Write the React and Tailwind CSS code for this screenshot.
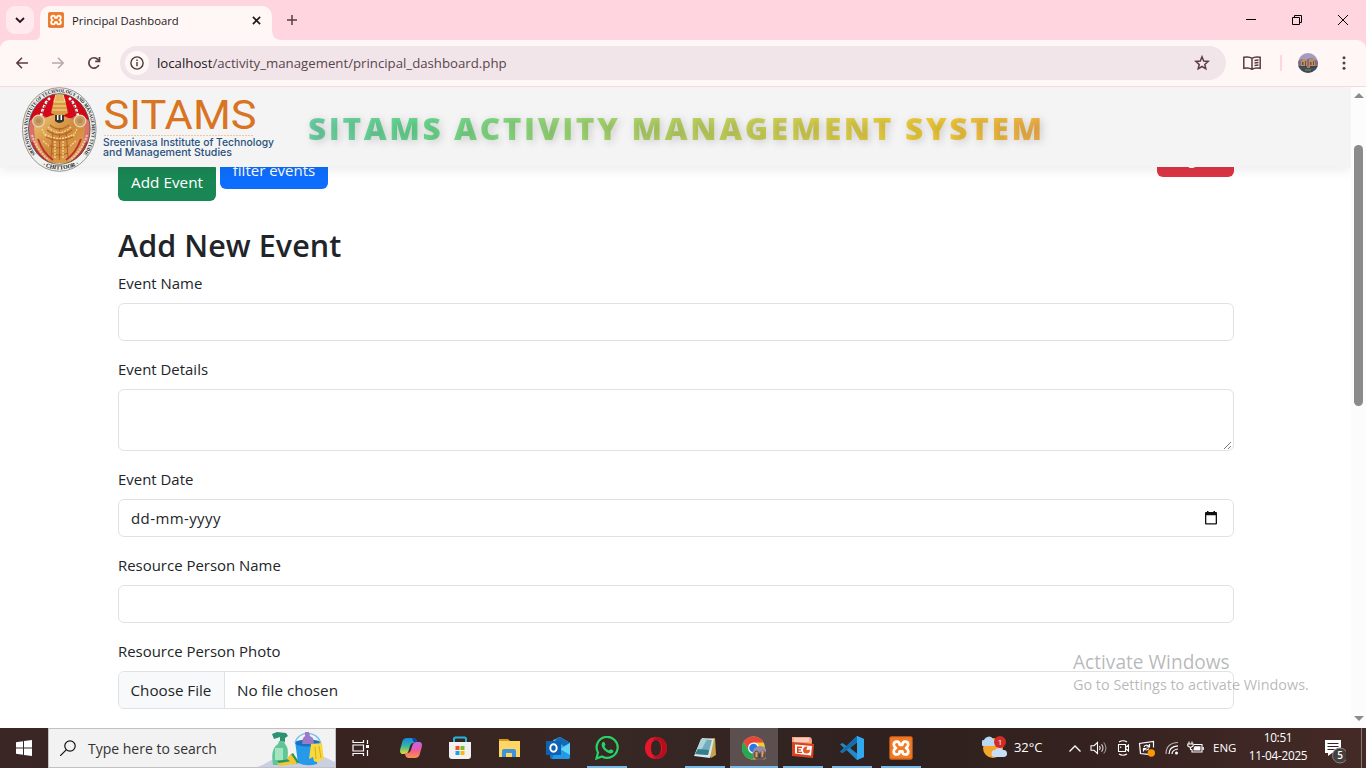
import React from "react";

const XamppMark = ({ className }) => (
  <svg viewBox="0 0 24 24" className={className}>
    <rect x=".3" y=".3" width="23.4" height="23.4" rx="2.2" fill="#d8651c" />
    <rect x="1.3" y="1.2" width="21.4" height="21" rx="1.6" fill="#f37a25" />
    <path
      d="M8 5.6c-2 0-3.2 1.2-3.2 3 0 1.500.9 2.500 2.200 3.400-1.400.8-2.300 1.900-2.300 3.400 0 1.900 1.300 3.100 3.200 3.100 2.300 0 2.700-1.500 2.700-3.200h2.800c0 1.700.5 3.200 2.700 3.200 1.900 0 3.200-1.200 3.200-3.100 0-1.500-.9-2.600-2.300-3.400 1.300-.9 2.200-1.900 2.200-3.400 0-1.800-1.200-3-3.100-3-2.200 0-2.700 1.400-2.700 3.200h-2.800C10.600 7 10.100 5.600 8 5.600Z"
      fill="none"
      stroke="#fff"
      strokeWidth="2.700"
      strokeLinejoin="round"
    />
  </svg>
);

const Avatar = ({ className }) => (
  <svg viewBox="0 0 20 20" className={className}>
    <clipPath id="avatarClip"><circle cx="10" cy="10" r="10" /></clipPath>
    <g clipPath="url(#avatarClip)">
      <path fill="#a49bbd" d="M0 0h20v20H0z" />
      <path fill="#7a6f86" d="M0 8l4-2 3 2 3-2 4-1 6 3v8H0z" />
      <path fill="#45454e" d="M0 13h20v7H0z" />
      <path fill="#c48d5c" d="M3 8c2-3 5-2 6 0v5H3zM11 7c2-2 5-2 6 1v5h-6z" />
      <path fill="#6d5148" d="M4 9h1.500v3H4zM7 8h1v5H7zM12 9h1.500v3H12zM15 8h1v4h-1z" />
      <path fill="#31566c" d="M2 14h7v2H2zM12 15h7v2h-7z" />
      <path fill="#56763f" d="M7 16h6v2H7z" />
      <path fill="#cf6d64" d="M9 13h3v2H9z" />
    </g>
  </svg>
);

const TabStrip = () => (
  <div className="flex h-10 items-end bg-[#ffd6df]">
    <div className="mb-1.5 ml-1.5 flex h-7 w-7 items-center justify-center rounded-[9px] bg-[#ffeaee]">
      <svg viewBox="0 0 10 10" className="h-2.5 w-2.5" fill="none" stroke="#23191c" strokeWidth="1.800">
        <path d="M1 3l4 4 4-4" />
      </svg>
    </div>
    <svg viewBox="0 0 6 6" className="h-1.5 w-1.5 self-end"><path d="M6 0v6H0q6 0 6-6" fill="#fff7f6" /></svg>
    <div className="flex h-[34px] w-[232px] items-center rounded-t-[10px] bg-[#fff7f6] pr-[11px] pl-2 pb-1.5">
      <XamppMark className="h-4 w-4" />
      <span className="mt-0.5 ml-2 flex-1 text-[11.3px] whitespace-nowrap text-[#23191c]">Principal Dashboard</span>
      <svg viewBox="0 0 10 10" className="h-[9px] w-[9px]" fill="none" stroke="#23191c" strokeWidth="1.800">
        <path d="M1 1l8 8M9 1L1 9" />
      </svg>
    </div>
    <svg viewBox="0 0 10 10" className="h-2.5 w-2.5 self-end"><path d="M0 0v10h10Q0 10 0 0" fill="#fff7f6" /></svg>
    <svg viewBox="0 0 10 10" className="mb-[15px] ml-[5px] h-2.5 w-2.5" stroke="#5a3c43" strokeWidth="1.500">
      <path d="M5 0v10M0 5h10" />
    </svg>
    <div className="ml-auto flex h-full items-center gap-9 pr-[18px]">
      <svg viewBox="0 0 10 10" className="h-2.5 w-2.5" shapeRendering="crispEdges"><path d="M0 4h10v1H0z" /></svg>
      <svg viewBox="0 0 10 10" className="h-2.5 w-2.5" fill="none" stroke="#000">
        <path d="M.5 2.500h7v7h-7zM2.500 2.500v-2h7v7h-2" />
      </svg>
      <svg viewBox="0 0 10 10" className="h-2.5 w-2.5" stroke="#000"><path d="M0 0l10 10M10 0L0 10" /></svg>
    </div>
  </div>
);

const Toolbar = () => (
  <div className="bg-[#ffd6df]">
    <div className="flex h-[47px] items-center rounded-t-[9px] border-b border-[#f8dadc] bg-[#fff7f6] pl-4">
      <svg viewBox="0 0 12 12" className="h-3 w-3" fill="none" stroke="#5a3c43" strokeWidth="1.500"><path d="M12 6H1M6 .7L.9 6 6 11.300" /></svg>
      <svg viewBox="0 0 12 12" className="ml-6 h-3 w-3" fill="none" stroke="#b9a8aa" strokeWidth="1.500"><path d="M0 6h11M6 .7L11.100 6 6 11.300" /></svg>
      <svg viewBox="0 0 14 14" className="ml-[23px] h-3.5 w-3.5" fill="none" stroke="#5a3c43" strokeWidth="1.700">
        <path d="M11.800 9A5.200 5.200 0 1 1 11 3.600l1.400 1.500" /><path d="M12.500 1v4.300H8.200" />
      </svg>
      <div className="ml-[19px] flex h-[34px] w-[1106px] items-center rounded-full bg-[#f1e5ea] pr-4 pl-[5px]">
        <span className="flex h-6 w-6 items-center justify-center rounded-full bg-[#fff7f6]">
          <svg viewBox="0 0 14 14" className="h-3.5 w-3.5" fill="none" stroke="#4a373c" strokeWidth="1.400">
            <circle cx="7" cy="7" r="6.100" /><path d="M7 6v4.300M7 3.500V5" />
          </svg>
        </span>
        <span className="mt-0.5 ml-2 text-[13.230px] text-[#5a454b]">
          <span className="text-[#21171a]">localhost</span>/activity_management/principal_dashboard.php
        </span>
        <svg viewBox="0 0 16 16" className="ml-auto h-4 w-4" fill="none" stroke="#5a3c43" strokeWidth="1.500">
          <path d="M8 1.800l1.700 4.200 4.500.4-3.400 3 1 4.400L8 11.500l-3.800 2.300 1-4.400-3.400-3 4.500-.4z" />
        </svg>
      </div>
      <svg viewBox="0 0 18 14" className="ml-[17px] h-3.5 w-[18px]" fill="none" stroke="#5a3c43" strokeWidth="1.500">
        <path d="M9 2.300C7.200.9 4 .7.800 1.300v11c3-.6 6.400-.3 8.200 1 1.800-1.300 5.200-1.600 8.200-1v-11C14 .7 10.800.9 9 2.300v11M11.500 4.500l4-.4M11.500 7l4-.4M11.500 9.500l4-.4" />
      </svg>
      <div className="ml-[19px] h-4 w-0.5 bg-[#ffd6df]" />
      <Avatar className="ml-4 h-5 w-5" />
      <svg viewBox="0 0 4 14" className="ml-6 h-3.5 w-1" fill="#5a3c43">
        <circle cx="2" cy="1.800" r="1.500" /><circle cx="2" cy="7" r="1.500" /><circle cx="2" cy="12.200" r="1.500" />
      </svg>
    </div>
  </div>
);

const CollegeLogo = () => (
  <svg viewBox="0 0 260 86" className="h-[86px] w-[260px] shrink-0">
    <defs>
      <path id="ring" d="M13.500 67A32.200 37 0 1 1 61.500 67" />
      <path id="ringLow" d="M15 76Q37.500 89 60 76" />
      <clipPath id="inner"><ellipse cx="37.300" cy="42" rx="30.800" ry="35.300" /></clipPath>
      <linearGradient id="gold" x1="0" y1="0" x2="1" y2="1">
        <stop offset="0" stopColor="#efc676" /><stop offset=".5" stopColor="#d08a3c" /><stop offset="1" stopColor="#e2a552" />
      </linearGradient>
    </defs>
    <ellipse cx="37.300" cy="42.500" rx="36.800" ry="41.800" fill="#f1f1ee" stroke="#8b8b8b" strokeWidth=".9" />
    <g clipPath="url(#inner)">
      <path d="M0 0h76v86H0z" fill="#f3ead2" />
      <path d="M0 5h76v27L52 36H22L4 34z" fill="#d3081b" />
      <path d="M4 36l15-9 6 4 25 0 6-4 15 9v22L56 76H18L6 58z" fill="#d7736a" />
      <path d="M12 40q14-14 25-12t26 12l-2 22-12 14H26L14 62z" fill="url(#gold)" />
      <path d="M10 55q6 14 16 20M65 55q-6 14-16 20M16 52q5 14 15 21M59 52q-5 14-15 21" fill="none" stroke="#bd2f35" strokeWidth="2" />
      <path d="M10 48q5 16 17 25M65 48q-5 16-17 25" fill="none" stroke="#f0c6bb" strokeWidth="2" strokeDasharray="2 1" />
      <path d="M32 12h11l3 14q-8 6-17 0z" fill="#d99a41" />
      <path d="M34 7h7l2 8H32zM31 19h13M30 23h15" fill="#e4b35b" stroke="#f7dd94" strokeWidth="1" />
      <path d="M28 11q-6 5-9 18M47 11q6 5 9 18" fill="none" stroke="#fff" strokeWidth="2.600" strokeDasharray="3 1.500" />
      <path d="M26 15q-5 5-6 15M49 15q5 5 6 15" fill="none" stroke="#4c7440" strokeWidth="1.200" strokeDasharray="2 3" />
      <circle cx="16.500" cy="34" r="5.800" fill="#c99f68" stroke="#eed9ad" strokeWidth="1.200" />
      <circle cx="58" cy="34" r="5.800" fill="#c99f68" stroke="#eed9ad" strokeWidth="1.200" />
      <circle cx="16.500" cy="34" r="2.500" fill="#b98a52" /><circle cx="58" cy="34" r="2.500" fill="#b98a52" />
      <path d="M28 38q9 8 19 0M25 43q12 10 25 0M24 50q13 7 27 0M26 58q11 6 23 0M29 66q8 4 17 0M31 44l-2 26M44 44l2 26M37.500 41v32" fill="none" stroke="#b26426" strokeWidth="1.100" />
      <path d="M26 40q11 11 23 0M23 47q14 9 29 0M33 54v18M41 54v18M21 54l6 5M54 54l-6 5M20 42l4 8M55 42l-4 8" fill="none" stroke="#f7d993" strokeWidth="1.300" strokeDasharray="2 1" />
      <path d="M33 28h9v6q-4.500 4-9 0z" fill="#3b332e" /><path d="M35 28h1.500v5H35zM38.500 28H40v5h-1.500z" fill="#fff" />
    </g>
    <ellipse cx="37.300" cy="42" rx="30.800" ry="35.300" fill="none" stroke="#4b4b4b" strokeWidth=".8" />
    <text fontFamily="Liberation Serif" fontWeight="700" fontSize="5" fill="#222">
      <textPath href="#ring" textLength="164" lengthAdjust="spacingAndGlyphs">SREENIVASA INSTITUTE OF TECHNOLOGY AND MANAGEMENT STUDIES</textPath>
    </text>
    <text fontFamily="Liberation Serif" fontWeight="700" fontSize="6" fill="#111">
      <textPath href="#ringLow" startOffset="6" textLength="38" lengthAdjust="spacingAndGlyphs">· CHITTOOR ·</textPath>
    </text>
    <text x="81.500" y="42" fontFamily="Roboto" fontSize="41" fill="#d87422" textLength="153" lengthAdjust="spacingAndGlyphs">SITAMS</text>
    <path d="M82 48.500h150" stroke="#f1c6a6" strokeDasharray="2 1" />
    <text x="81" y="58.500" fontFamily="Inter" fontWeight="500" fontSize="11" fill="#29517d" textLength="171" lengthAdjust="spacingAndGlyphs">Sreenivasa Institute of Technology</text>
    <text x="81" y="69" fontFamily="Inter" fontWeight="500" fontSize="11" fill="#29517d" textLength="129" lengthAdjust="spacingAndGlyphs">and Management Studies</text>
  </svg>
);

const SiteHeader = () => (
  <header className="relative z-10 flex h-20 items-start bg-[#f4f4f4] pl-[22px] shadow-[0_4px_10px_rgba(0,0,0,0.07)]">
    <CollegeLogo />
    <h1 className="mt-[18px] ml-[26px] origin-left scale-x-[1.037] bg-[linear-gradient(100deg,#6ed2a8_0%,#68dc92_15%,#95da7b_32%,#bad666_49%,#d9d452_68%,#f2ce38_84%,#f6b24c_100%)] bg-clip-text text-[30.500px] leading-[46px] font-extrabold tracking-[2.500px] whitespace-nowrap text-transparent [text-shadow:2px_2px_8px_rgba(0,0,0,0.17)]">
      SITAMS ACTIVITY MANAGEMENT SYSTEM
    </h1>
  </header>
);

const Field = ({ label, children }) => (
  <div className="mb-4">
    <div className="mb-2 text-[14.950px] leading-6 text-[#212529]">{label}</div>
    {children}
  </div>
);

const box = "flex w-full items-center rounded-md border border-[#dee2e6] bg-white text-[15px] text-[#212529]";

const Page = () => (
  <div className="flex h-[641px] overflow-hidden bg-white">
    <div className="relative w-[1351px] overflow-hidden">
      <SiteHeader />
      <main className="pr-[117px] pl-[118px]">
        <div className="flex h-[34px] items-start overflow-hidden text-[15px] text-white">
          <div className="-mt-1 flex h-[38px] w-[98px] items-center justify-center rounded-md bg-[#198754] text-[15.300px]">Add Event</div>
          <div className="-mt-4 ml-1 flex h-[38px] w-[108px] items-center justify-center rounded-md bg-[#0d6efd]">filter events</div>
          <div className="-mt-7 ml-auto flex h-[38px] w-[77px] items-center justify-center rounded-md bg-[#dc3545]">Logout</div>
        </div>
        <h2 className="mt-[25px] mb-[7px] text-[30.500px] leading-[38px] font-semibold tracking-[0.050px] text-[#212529]">Add New Event</h2>
        <Field label="Event Name"><div className={box + " h-[38px]"} /></Field>
        <Field label="Event Details">
          <div className={box + " h-[62px]"}>
            <svg viewBox="0 0 8 8" className="mr-0.5 mb-px ml-auto h-[7px] w-[7px] self-end" stroke="#555" strokeWidth=".9"><path d="M0 8l8-8M4.500 8L8 4.500" /></svg>
          </div>
        </Field>
        <Field label="Event Date">
          <div className={box + " h-[38px] justify-between pr-[15px] pl-3"}>
            <span className="tracking-[0.400px]">dd-mm-yyyy</span>
            <svg viewBox="0 0 14 14" className="h-3.5 w-3.5"><path fillRule="evenodd" d="M2 1h1V0h1.500v1h5V0H11v1h1q1 0 1 1v10.500q0 1-1 1H2q-1 0-1-1V2q0-1 1-1Zm.3 3.300v7.900h9.400V4.300Z" fill="#111" /></svg>
          </div>
        </Field>
        <Field label="Resource Person Name"><div className={box + " h-[38px]"} /></Field>
        <Field label="Resource Person Photo">
          <div className={box + " h-[38px] overflow-hidden"}>
            <span className="flex h-full w-[106px] items-center border-r border-[#dee2e6] bg-[#f8f9fa] pl-[11.500px] text-[15.200px]">Choose File</span>
            <span className="pl-3 text-[15.250px]">No file chosen</span>
          </div>
        </Field>
      </main>
      <div className="absolute top-[563px] left-[1073px] z-20 whitespace-nowrap text-[#8a8a8a]/60">
        <div className="text-[19.100px] leading-6">Activate Windows</div>
        <div className="text-[14.400px] leading-[22px]">Go to Settings to activate Windows.</div>
      </div>
    </div>
    <div className="flex w-[15px] flex-col items-center bg-[#fcfcfc]">
      <svg viewBox="0 0 10 5" className="mt-1.5 h-[5px] w-2.5" fill="#8b8b8b"><path d="M5 0l5 5H0z" /></svg>
      <div className="mt-[47px] h-[261px] w-[9px] rounded-full bg-[#8b8b8b]" />
      <svg viewBox="0 0 10 5" className="mt-auto mb-[7px] h-[5px] w-2.5" fill="#8b8b8b"><path d="M0 0h10L5 5z" /></svg>
    </div>
  </div>
);

const TaskApp = ({ children, open, active }) => (
  <div className="flex h-10 w-[49px] shrink-0 justify-center">
    <div className={"flex h-10 flex-col items-center " + (active ? "w-12 bg-[#5c4f4f]" : open ? "w-10" : "w-12")}>
      <svg viewBox="0 0 24 24" className="mt-2 h-6 w-6" fill="none">{children}</svg>
      {(open || active) && <div className="mt-auto h-0.5 w-full bg-[#76b9ed]" />}
    </div>
  </div>
);

const SearchBox = () => (
  <div className="mr-px flex h-10 w-72 shrink-0 items-center border border-[#c4c0c0] bg-[#f2f2f2] pl-[11px]">
    <svg viewBox="0 0 16 16" className="h-4 w-4" fill="none" stroke="#111" strokeWidth="1.200"><circle cx="10" cy="6" r="5.200" /><path d="M6.200 9.800L0 16" /></svg>
    <span className="ml-3 text-[14px] text-[#333]">Type here to search</span>
    <svg viewBox="0 0 78 38" className="ml-auto h-[38px] w-[78px]">
      <path d="M0 38c12-4 13-9 27-8 17 1 25-6 38-3 6 2 10 5 13 6v5z" fill="#c9d0e4" />
      <path d="M15 5l5-2 9 1 2 3-3 2v4h-5V8l-6 2z" fill="#2b9274" />
      <path d="M22 12h5l1 3c4 4 3 9 2 21H16c-2-11 0-18 5-21z" fill="#62c596" />
      <path d="M18 19h8v12h-8z" fill="#a3e4c2" />
      <path d="M38 12l26 1-4 22q-10 3-19-1z" fill="#2799eb" />
      <ellipse cx="51" cy="14" rx="13" ry="3.500" fill="#1673bf" /><path d="M38 14c3-13 23-13 26 1" fill="none" stroke="#76bdf0" strokeWidth="1.300" />
      <path d="M48 3h4l1 4 3 2 1 6H45l1-6 2-2z" fill="#9b7bc8" />
      <path d="M54 15l11-1 2 18-4-2-1 4-5-2-1-4-4 2z" fill="#f7d83d" /><path d="M58 18l1 12M62 17l2 12" stroke="#d5ac22" />
      <path d="M20 34l13-2 3 3-13 2z" fill="#f4c62d" /><path d="M20 32l13-2 2 2-13 2zM33 26l6 9 3-2-6-9z" fill="#279659" /><path d="M30 29l4-4 6 9-4 2z" fill="#f4c62d" />
    </svg>
  </div>
);

const Tray = () => (
  <div className="ml-auto flex h-10 shrink-0 items-center text-white">
    <svg viewBox="0 0 26 24" className="h-6 w-[26px]">
      <circle cx="11" cy="12" r="10" fill="#f6a52b" />
      <path d="M2 10a3 3 0 0 1 0-6 5 5 0 0 1 9-1 4 4 0 0 1 1 7z" fill="#b9d8f4" />
      <path d="M13 21a3.500 3.500 0 0 1 0-7 5 5 0 0 1 8 0 3.500 3.500 0 0 1 1 7z" fill="#c6def7" />
      <circle cx="18" cy="6" r="6" fill="#d22b2b" />
      <text x="18" y="9" textAnchor="middle" fontFamily="Open Sans" fontSize="8" fill="#fff">1</text>
    </svg>
    <span className="ml-1.5 w-[31px] text-[13px] tracking-[-0.100px]">32°C</span>
    <svg viewBox="0 0 12 7" className="ml-6 h-[7px] w-3" fill="none" stroke="#fff" strokeWidth="1.300"><path d="M.5 6.500L6 1l5.500 5.500" /></svg>
    <svg viewBox="0 0 18 14" className="ml-[9px] h-3.5 w-[18px]" fill="none" stroke="#fff" strokeWidth="1.100">
      <path d="M1 4.700h3L7.500 1.500v11L4 9.300H1zM9.500 5q1.500 2 0 4" /><path d="M11.500 3.300q3 3.700 0 7.400" opacity=".8" /><path d="M13.700 1.500q4.500 5.500 0 11" opacity=".5" />
    </svg>
    <svg viewBox="0 0 13 16" className="ml-[9px] h-4 w-[13px]" fill="none" stroke="#fff" strokeWidth="1.100"><path d="M1.500 4.500h7v7h-7zM8.500 7.500L11.500 5v6l-3-2.500M2 2q4-2.500 8 0M2 14q4 2.500 8 0" /><path d="M3.700 6.500v1.500" /></svg>
    <svg viewBox="0 0 18 17" className="ml-2 h-[17px] w-[18px]" fill="none" stroke="#fff" strokeWidth="1.200">
      <path d="M10 14.300l-7.500-.8L1.500 3.500l14-2v6M5.500 11.500V8.500h3M5.800 8.500c1 2 4 2 5 0M11.500 4v3H8.500M11 6.500C9.500 4.500 6.500 5 6 7" /><circle cx="13.300" cy="13" r="3.700" fill="#ff9800" stroke="none" />
    </svg>
    <svg viewBox="0 0 14 14" className="ml-[9px] h-3.5 w-3.5" fill="none" stroke="#fff" strokeWidth="1.200">
      <path d="M1 13Q1 2 13 1.500" opacity=".65" /><path d="M4 13Q4 5.500 13 4.800M7 13q0-4 6-5" /><circle cx="11.500" cy="12" r="1.500" fill="#fff" stroke="none" />
    </svg>
    <svg viewBox="0 0 17 14" className="ml-2 h-3.5 w-[17px]" fill="none" stroke="#fff" strokeWidth="1.100"><path d="M7 3.500h8v7.500H5V8.500M2 .5v2M5 .5v2M.8 3h5.400v2L3.500 6.500.8 5zM3.500 6.500V8.500H5M16.300 6v3" /><path d="M7.500 5.200h6v4.200H6.500V8z" fill="#fff" stroke="none" /></svg>
    <span className="ml-[9px] w-[23px] text-[11.500px]">ENG</span>
    <div className="-mt-1 ml-[9px] w-[66px] text-center text-[11.800px] leading-[18px] tracking-[-0.300px] whitespace-nowrap"><div>10:51</div><div>11-04-2025</div></div>
    <svg viewBox="0 0 26 26" className="mt-1.5 ml-[9px] h-[26px] w-[26px]">
      <path d="M5 2h16v13H12l-4 3v-3H5z" fill="#fff" /><path d="M7.500 5.500h11M7.500 8.500h11M7.500 11.500h7" stroke="#382523" />
      <circle cx="20" cy="17.500" r="7.500" fill="#44403f" stroke="#8c8584" /><text x="20" y="21" textAnchor="middle" fontFamily="Open Sans" fontWeight="600" fontSize="10" fill="#fff">5</text>
    </svg>
    <div className="ml-[15px] h-full w-[5px] border-l border-[#847776]" />
  </div>
);

const Taskbar = () => (
  <div className="flex h-10 bg-[linear-gradient(90deg,#3a2624_0%,#382320_25%,#382825_45%,#2e211f_65%,#352220_80%,#442a27_100%)]">
    <div className="flex w-12 shrink-0 items-center justify-center">
      <svg viewBox="0 0 16 16" className="h-4 w-4" fill="#fff"><path d="M0 2.200L7 1.200v6.300H0zM8 1.100L16 0v7.500H8zM0 8.500h7v6.300l-7-1zM8 8.500h8V16l-8-1.100z" /></svg>
    </div>
    <SearchBox />
    <TaskApp>
      <path d="M3 4v2.500h10.500V4M3 20v-2.500h10.500V20M3 9h10.500v6H3zM17.500 4v4M17.500 14v6" stroke="#fff" strokeWidth="1.200" /><path d="M16 9h3v3h-3z" fill="#fff" />
    </TaskApp>
    <TaskApp>
      <defs>
        <linearGradient id="cpL" x1="0" y1="0" x2="0" y2="1"><stop offset="0" stopColor="#1687e0" /><stop offset=".5" stopColor="#36b5a0" /><stop offset="1" stopColor="#e7d92f" /></linearGradient>
        <linearGradient id="cpR" x1="0" y1="0" x2="0" y2="1"><stop offset="0" stopColor="#bd65f0" /><stop offset=".5" stopColor="#ef5a9f" /><stop offset="1" stopColor="#fa953f" /></linearGradient>
      </defs>
      <path d="M8 2h7q2 0 2.800 3L18 7h-4q-2 0-3 3l-1.500 5q-1 3-4 3H3q-3-1-1.500-6l2-7Q4.500 2 8 2z" fill="url(#cpL)" />
      <path d="M13 2h2q2 0 2.800 3L18 7h-3z" fill="#1743a6" />
      <path d="M16 22H9q-2 0-2.800-3L6 17h3q2 0 3-3l1.600-5q1-3 4-3H21q3 1 1.500 6l-2 7Q19.500 22 16 22z" fill="url(#cpR)" />
    </TaskApp>
    <TaskApp>
      <path d="M6 6V3q0-1.500 1.500-1.500h9Q18 1.500 18 3v3" stroke="#26b5df" strokeWidth="2" /><path d="M1 6h22v14q0 3-3 3H4q-3 0-3-3z" fill="#f1f1f1" />
      <path d="M7.500 10h4v4h-4z" fill="#f1511b" /><path d="M12.500 10h4v4h-4z" fill="#80bc22" /><path d="M7.500 15h4v4h-4z" fill="#1ba1e8" /><path d="M12.500 15h4v4h-4z" fill="#fbb813" />
    </TaskApp>
    <TaskApp>
      <path d="M2 3h9l2 2v4H2z" fill="#db9816" /><path d="M2 5h21v16H2z" fill="#ffd565" /><path d="M5 21v-6q0-2 2-2h10q2 0 2 2v6h-4v-4H9v4z" fill="#3d94d9" />
    </TaskApp>
    <TaskApp>
      <path d="M4 7l10-6 10 6v14q0 2-2 2H6q-2 0-2-2z" fill="#1677ca" /><path d="M7 4l7-3 10 6-9 7-8-5z" fill="#38b4ea" /><path d="M14 1l10 6-5 4-10-7z" fill="#1769b5" /><path d="M10 14l14-7v14q0 2-2 2H6z" fill="#2199e6" /><path d="M14 13l10-6v12z" fill="#63d4f7" /><path d="M0 5h15v14H0z" fill="#0e62b5" /><ellipse cx="7.500" cy="12" rx="3.200" ry="3.700" stroke="#fff" strokeWidth="2" />
    </TaskApp>
    <TaskApp open>
      <path d="M1.500 22.500l1.500-6a10.500 10.500 0 1 1 4 4z" stroke="#27d366" strokeWidth="2.200" /><path d="M7.300 6.500c1-1 2-.8 2.300 0l.8 2c.2.600-.9 1.500-.9 1.900 1 2 2.400 3.200 4.500 4 .5 0 1.300-1.400 1.800-1.200l2.200 1c1 .5.200 2.300-.8 2.900-2 1-4.600-.2-6.700-2-3-2.500-5-5.800-3.200-8.600z" fill="#27d366" />
    </TaskApp>
    <TaskApp>
      <path fillRule="evenodd" d="M12 1C5.500 1 1 5.500 1 12s4.500 11 11 11 11-4.500 11-11S18.500 1 12 1zm0 3c3 0 5 3 5 8s-2 8-5 8-5-3-5-8 2-8 5-8z" fill="#e9172c" /><path d="M14 1.200c5 1 9 5 9 10.800s-4 10-9 10.800c-2 .3-4-.8-5-2.800 6 2 9-2 9-8s-3-10-9-8c1-2 3-3 5-2.800z" fill="#b70d1d" />
    </TaskApp>
    <TaskApp open>
      <path d="M9 3l13-1 1 17-5 3z" fill="#c6a24c" /><path d="M9 2l12 1-4 19-16-2z" fill="#d9e8e9" /><path d="M8 3l11 1-4 15-13-1z" fill="#72adb9" /><path d="M8 3l6 .5L6 18l-4-.3z" fill="#add4d9" /><path d="M5 13l11 1-1 5-13-1z" fill="#347d8c" />
    </TaskApp>
    <TaskApp active>
      <circle cx="11.500" cy="12" r="11.500" fill="#f7ca2d" /><path d="M1.500 6A11.500 11.500 0 0 1 21.500 6.500H11.500L7 15z" fill="#e8453c" /><path d="M1.500 6A11.500 11.500 0 0 0 11 23.500l5-9-9 .5z" fill="#27a852" /><circle cx="11.500" cy="12" r="5.500" fill="#fff" /><circle cx="11.500" cy="12" r="4.300" fill="#2879e7" />
      <g transform="translate(10.500 10)"><circle cx="7.500" cy="7.500" r="7.500" fill="#948ba8" /><path d="M1 7q3-5 6 0 3-5 7 0v3q-3 5-7 5-5-1-6-5z" fill="#755646" /><path d="M3 6h2v5H3zM9 5h2v6H9z" fill="#d4a36a" /><path d="M6 8h2v4H6zM11 8h1v3h-1z" fill="#31455c" /></g>
    </TaskApp>
    <TaskApp open>
      <path d="M1 1h17q3 0 3 4l-1 15H1z" fill="#f6a588" /><path d="M3 2h15v4H3z" fill="#fbcdbb" /><path d="M1 6l22 2-1 14-21-2z" fill="#d8441e" /><path d="M4 8.500l17 1.500-1 9.500-16-2z" fill="#fff" /><path d="M6 10.500h5V12H7.500v1.200H10v1.300H7.500v1.200H11v1.300H6z" fill="#d8441e" /><circle cx="15.500" cy="14" r="3.500" fill="#e35a2b" /><path d="M15.500 14l1-4 3.500 3.500z" fill="#fff" />
    </TaskApp>
    <TaskApp open>
      <path d="M17 0l7 3v18l-7 3L6.500 14 2.500 17 0 15.800 4 12 0 8.200 2.500 7l4 3zM17 6.500L10 12l7 5.500z" fill="#2489ca" fillRule="evenodd" /><path d="M17 0l7 3v18l-7 3z" fill="#32a8ee" /><path d="M0 15.800L17 0v6.500L2.500 17z" fill="#176da9" />
    </TaskApp>
    <div className="flex h-10 w-[49px] shrink-0 justify-center">
      <div className="flex w-10 flex-col items-center">
        <XamppMark className="mt-2 h-6 w-6" />
        <div className="mt-auto h-0.5 w-full bg-[#76b9ed]" />
      </div>
    </div>
    <Tray />
  </div>
);

export default function App() {
  return (
    <div className="h-[768px] w-[1366px] overflow-hidden bg-white font-['Open_Sans',sans-serif]">
      <TabStrip />
      <Toolbar />
      <Page />
      <Taskbar />
    </div>
  );
}
